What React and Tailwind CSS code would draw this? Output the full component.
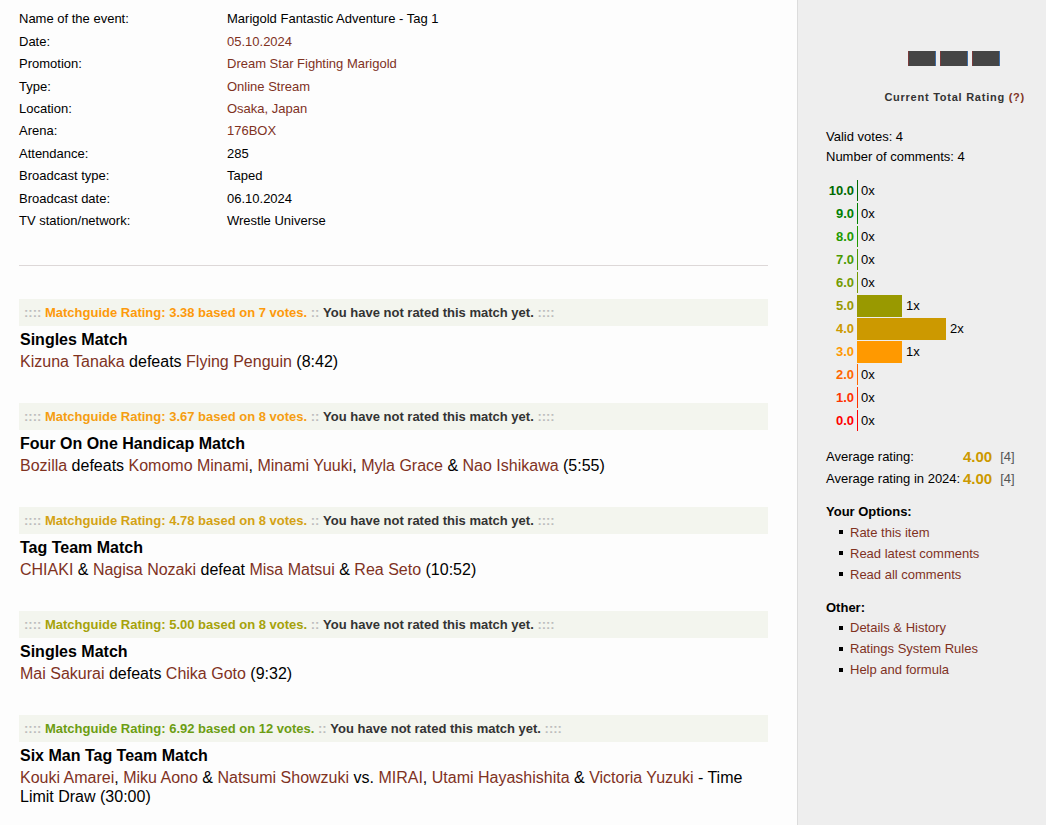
const link = 'text-[#80321f]';

const info = [
  ['Name of the event:', 'Marigold Fantastic Adventure - Tag 1', false],
  ['Date:', '05.10.2024', true],
  ['Promotion:', 'Dream Star Fighting Marigold', true],
  ['Type:', 'Online Stream', true],
  ['Location:', 'Osaka, Japan', true],
  ['Arena:', '176BOX', true],
  ['Attendance:', '285', false],
  ['Broadcast type:', 'Taped', false],
  ['Broadcast date:', '06.10.2024', false],
  ['TV station/network:', 'Wrestle Universe', false],
];

// result pieces: [text, isLink]
const matches = [
  {
    rating: '3.38',
    votes: 7,
    color: 'text-[#fd9a0b]',
    title: 'Singles Match',
    result: [['Kizuna Tanaka', 1], [' defeats ', 0], ['Flying Penguin', 1], [' (8:42)', 0]],
  },
  {
    rating: '3.67',
    votes: 8,
    color: 'text-[#f59e12]',
    title: 'Four On One Handicap Match',
    result: [
      ['Bozilla', 1], [' defeats ', 0], ['Komomo Minami', 1], [', ', 0], ['Minami Yuuki', 1], [', ', 0],
      ['Myla Grace', 1], [' & ', 0], ['Nao Ishikawa', 1], [' (5:55)', 0],
    ],
  },
  {
    rating: '4.78',
    votes: 8,
    color: 'text-[#d3a214]',
    title: 'Tag Team Match',
    result: [
      ['CHIAKI', 1], [' & ', 0], ['Nagisa Nozaki', 1], [' defeat ', 0], ['Misa Matsui', 1], [' & ', 0],
      ['Rea Seto', 1], [' (10:52)', 0],
    ],
  },
  {
    rating: '5.00',
    votes: 8,
    color: 'text-[#a6a20a]',
    title: 'Singles Match',
    result: [['Mai Sakurai', 1], [' defeats ', 0], ['Chika Goto', 1], [' (9:32)', 0]],
  },
  {
    rating: '6.92',
    votes: 12,
    color: 'text-[#6c9d12]',
    title: 'Six Man Tag Team Match',
    result: [
      ['Kouki Amarei', 1], [', ', 0], ['Miku Aono', 1], [' & ', 0], ['Natsumi Showzuki', 1], [' vs. ', 0],
      ['MIRAI', 1], [', ', 0], ['Utami Hayashishita', 1], [' & ', 0], ['Victoria Yuzuki', 1],
      [' - Time Limit Draw (30:00)', 0],
    ],
  },
];

const histogram = [
  { label: '10.0', text: 'text-[#006a00]', line: 'bg-[#006a00]', count: 0 },
  { label: '9.0', text: 'text-[#008000]', line: 'bg-[#008000]', count: 0 },
  { label: '8.0', text: 'text-[#1f9a00]', line: 'bg-[#1f9a00]', count: 0 },
  { label: '7.0', text: 'text-[#4a9a00]', line: 'bg-[#4a9a00]', count: 0 },
  { label: '6.0', text: 'text-[#739a00]', line: 'bg-[#739a00]', count: 0 },
  { label: '5.0', text: 'text-[#999900]', line: 'bg-[#999900]', count: 1, bar: 'w-[45px]' },
  { label: '4.0', text: 'text-[#cc9900]', line: 'bg-[#cc9900]', count: 2, bar: 'w-[89px]' },
  { label: '3.0', text: 'text-[#ff9900]', line: 'bg-[#ff9900]', count: 1, bar: 'w-[45px]' },
  { label: '2.0', text: 'text-[#ff6600]', line: 'bg-[#ff6600]', count: 0 },
  { label: '1.0', text: 'text-[#ff3300]', line: 'bg-[#ff3300]', count: 0 },
  { label: '0.0', text: 'text-[#ff0000]', line: 'bg-[#ff0000]', count: 0 },
];

function Dots({ children }) {
  return <span className="text-[#bdbdbd]">{children}</span>;
}

function Match({ m }) {
  return (
    <div className="mb-[32px]">
      {/* rating strip */}
      <div className="flex h-[27px] items-center bg-[#f3f5ee] pl-[5px] text-[13px] font-bold whitespace-pre">
        <Dots>{':::: '}</Dots>
        <span className={m.color}>{`Matchguide Rating: ${m.rating} based on ${m.votes} votes.`}</span>
        <Dots>{' :: '}</Dots>
        <span className="text-[#333]">You have not rated this match yet.</span>
        <Dots>{' ::::'}</Dots>
      </div>
      <div className="mt-[4px] pl-[1px] text-[16px] leading-[19px] font-bold text-black">{m.title}</div>
      <p className="mt-[3px] pl-[1px] text-[16px] leading-[19px] text-black">
        {m.result.map(([t, l], i) =>
          l ? (
            <span key={i} className={link}>
              {t}
            </span>
          ) : (
            t
          )
        )}
      </p>
    </div>
  );
}

function Sidebar() {
  return (
    <aside className="w-[249px] shrink-0 border-l border-[#dcdcdc] bg-[#eeeeee] pl-[28px] pr-[21px] text-[13px] text-black">
      {/* rating digits placeholder */}
      <div className="mt-[51px] flex justify-end gap-[4px] pr-[25px]">
        {[0, 1, 2].map((i) => (
          <div
            key={i}
            className="h-[15px] w-[28px] border-l border-r border-l-[#7a3b3b] border-r-[#3e6ea8] bg-[#454545]"
          />
        ))}
      </div>
      <div className="mt-[24px] text-right text-[11px] leading-[14px] font-bold tracking-[0.75px] text-[#333]">
        Current Total Rating <span className={link}>(?)</span>
      </div>

      <div className="mt-[23px] leading-[20px]">
        <div>Valid votes: 4</div>
        <div>Number of comments: 4</div>
      </div>

      {/* histogram */}
      <div className="mt-[12px]">
        {histogram.map((h) => (
          <div key={h.label} className="flex h-[23px] items-center">
            <div className={`w-[28px] text-right font-bold ${h.text}`}>{h.label}</div>
            <div className="ml-[3px] flex h-full items-center">
              {h.bar ? (
                <div className={`h-[22px] ${h.bar} ${h.line}`} />
              ) : (
                <div className={`h-[21px] w-px ${h.line}`} />
              )}
              <span className={h.bar ? 'ml-[4px]' : 'ml-[3px]'}>{h.count}x</span>
            </div>
          </div>
        ))}
      </div>

      {/* averages */}
      <div className="mt-[14px] leading-[22px]">
        {['Average rating:', 'Average rating in 2024:'].map((l) => (
          <div key={l} className="flex items-center">
            <span className="w-[137px]">{l}</span>
            <span className="text-[15px] font-bold text-[#cc9900]">4.00</span>
            <span className="ml-[8px] text-[#555]">[4]</span>
          </div>
        ))}
      </div>

      <div className="mt-[12px] font-bold">Your Options:</div>
      <ul className="pl-[13px] leading-[21px]">
        {['Rate this item', 'Read latest comments', 'Read all comments'].map((t) => (
          <li key={t} className="flex items-center">
            <span className="mr-[7px] h-[4px] w-[4px] bg-black" />
            <span className={link}>{t}</span>
          </li>
        ))}
      </ul>

      <div className="mt-[13px] font-bold">Other:</div>
      <ul className="pl-[13px] leading-[21px]">
        {['Details & History', 'Ratings System Rules', 'Help and formula'].map((t) => (
          <li key={t} className="flex items-center">
            <span className="mr-[7px] h-[4px] w-[4px] bg-black" />
            <span className={link}>{t}</span>
          </li>
        ))}
      </ul>
    </aside>
  );
}

export default function App() {
  return (
    <div className="flex h-[825px] w-[1046px] overflow-hidden bg-[#fdfdfd] font-['Liberation_Sans',Arial,sans-serif]">
      <main className="w-[797px] shrink-0 pl-[19px] pr-[29px]">
        {/* event details */}
        <table className="mt-[8px] text-[13px] text-black">
          <tbody>
            {info.map(([k, v, isLink]) => (
              <tr key={k} className="h-[22.4px]">
                <td className="w-[208px] p-0 align-middle">{k}</td>
                <td className={`p-0 align-middle ${isLink ? link : ''}`}>{v}</td>
              </tr>
            ))}
          </tbody>
        </table>

        <div className="mt-[33px] h-px bg-[#ddd8d8]" />

        {/* match card */}
        <div className="mt-[33px]">
          {matches.map((m, i) => (
            <Match key={i} m={m} />
          ))}
        </div>
      </main>
      <Sidebar />
    </div>
  );
}
